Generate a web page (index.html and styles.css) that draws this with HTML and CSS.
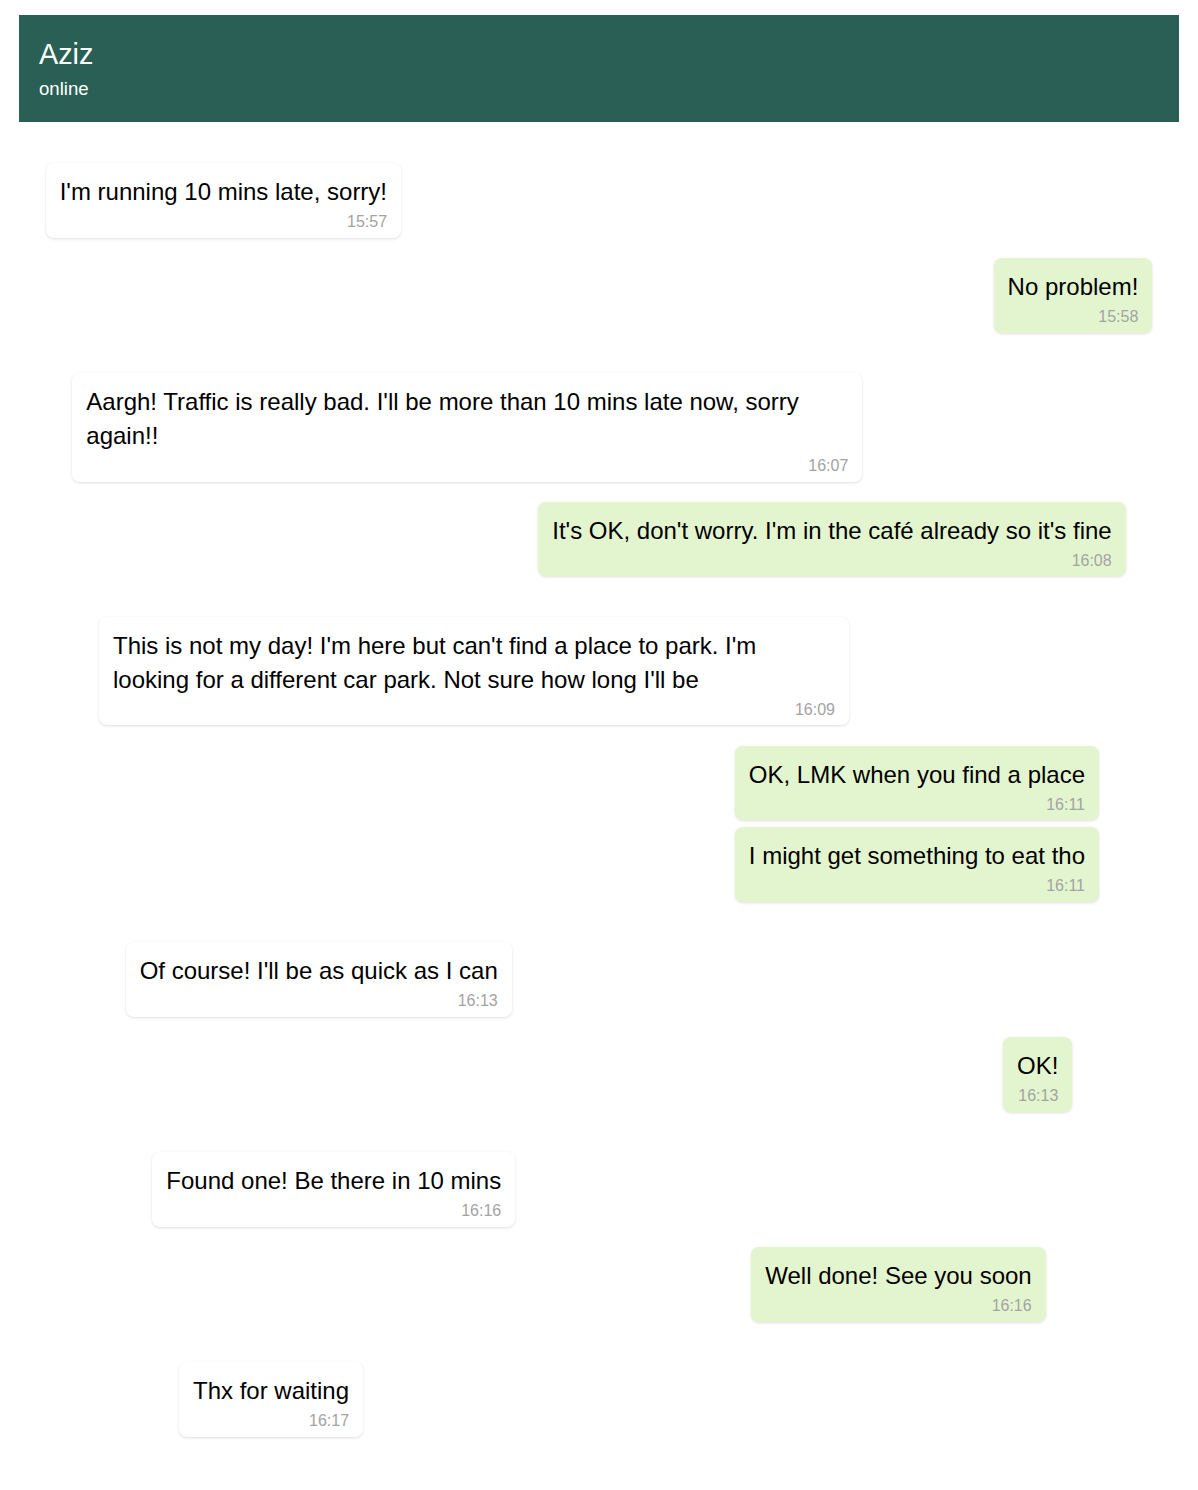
FILE: index.html
```html
<!DOCTYPE html>
<html lang="en">
<head>
<meta charset="utf-8">
<title>Chat with Aziz</title>
<link rel="stylesheet" href="styles.css">
</head>
<body>
<div class="page">
  <header class="chat-header">
    <div class="contact-name">Aziz</div>
    <div class="contact-status">online</div>
  </header>
  <main class="chat">
    <div class="group in lvl1">
      <div class="bubble"><div class="text">I'm running 10 mins late, sorry!</div><div class="time">15:57</div></div>
    </div>
    <div class="group out lvl1">
      <div class="bubble"><div class="text">No problem!</div><div class="time">15:58</div></div>
    </div>
    <div class="group in lvl2">
      <div class="bubble"><div class="text">Aargh! Traffic is really bad. I'll be more than 10 mins late now, sorry again!!</div><div class="time">16:07</div></div>
    </div>
    <div class="group out lvl2">
      <div class="bubble"><div class="text">It's OK, don't worry. I'm in the café already so it's fine</div><div class="time">16:08</div></div>
    </div>
    <div class="group in lvl3">
      <div class="bubble"><div class="text">This is not my day! I'm here but can't find a place to park. I'm looking for a different car park. Not sure how long I'll be</div><div class="time">16:09</div></div>
    </div>
    <div class="group out lvl3">
      <div class="bubble"><div class="text">OK, LMK when you find a place</div><div class="time">16:11</div></div>
      <div class="bubble"><div class="text">I might get something to eat tho</div><div class="time">16:11</div></div>
    </div>
    <div class="group in lvl4">
      <div class="bubble"><div class="text">Of course! I'll be as quick as I can</div><div class="time">16:13</div></div>
    </div>
    <div class="group out lvl4">
      <div class="bubble"><div class="text">OK!</div><div class="time">16:13</div></div>
    </div>
    <div class="group in lvl5">
      <div class="bubble"><div class="text">Found one! Be there in 10 mins</div><div class="time">16:16</div></div>
    </div>
    <div class="group out lvl5">
      <div class="bubble"><div class="text">Well done! See you soon</div><div class="time">16:16</div></div>
    </div>
    <div class="group in lvl6">
      <div class="bubble"><div class="text">Thx for waiting</div><div class="time">16:17</div></div>
    </div>
  </main>
</div>
</body>
</html>
```

FILE: styles.css
```css
* {
  box-sizing: border-box;
}

body {
  margin: 0;
  background: #ffffff;
  font-family: "Liberation Sans", Arial, Helvetica, sans-serif;
  color: #000000;
}

.page {
  padding: 15px 19px 40px;
}

.chat-header {
  background: #2a5f56;
  color: #ffffff;
  padding: 23px 20px 23px;
  display: flex;
  flex-direction: column;
  gap: 8px;
}

.contact-name {
  font-size: 28.8px;
  line-height: 32px;
}

.contact-status {
  font-size: 18.6px;
  line-height: 21px;
}

.chat {
  display: flex;
  flex-direction: column;
  gap: 20.2px;
  padding-top: 41px;
}

.group {
  display: flex;
  flex-direction: column;
  gap: 7px;
}

.group.in {
  align-items: flex-start;
}

.group.out {
  align-items: flex-end;
  margin-bottom: 20.2px;
}

.lvl1 { margin-left: 26.67px; margin-right: 26.67px; }
.lvl2 { margin-left: 53.33px; margin-right: 53.33px; }
.lvl3 { margin-left: 80px; margin-right: 80px; }
.lvl4 { margin-left: 106.67px; margin-right: 106.67px; }
.lvl5 { margin-left: 133.33px; margin-right: 133.33px; }
.lvl6 { margin-left: 160px; margin-right: 160px; }

.bubble {
  max-width: 75%;
  padding: 12px 14px 2px;
  border-radius: 8px;
  background: #ffffff;
  box-shadow: 0 1px 3px rgba(0, 0, 0, 0.13);
  display: flex;
  flex-direction: column;
}

.out .bubble {
  background: #e3f5cf;
}

.text {
  font-size: 24px;
  line-height: 34px;
}

.time {
  align-self: flex-end;
  font-size: 16px;
  line-height: 26.67px;
  color: #a3a3a3;
}
```
